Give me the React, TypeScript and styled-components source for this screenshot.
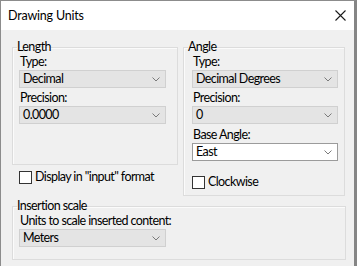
import React from "react";
import styled, { createGlobalStyle } from "styled-components";

const GlobalStyle = createGlobalStyle`
  html, body {
    margin: 0;
    padding: 0;
    background: #f0f0f0;
  }
  body {
    font-family: Lato, "Noto Sans", sans-serif;
    font-size: 12.5px;
    letter-spacing: -0.6px;
    color: #000;
  }
`;

const Window = styled.div`
  width: 357px;
  height: 266px;
  box-sizing: border-box;
  border-left: 1px solid #8c8c8c;
  border-top: 1px solid #8c8c8c;
  border-right: 3px solid #858585;
  background: #f0f0f0;
  display: flex;
  flex-direction: column;
  overflow: hidden;
`;

const TitleBar = styled.div`
  height: 29px;
  flex-shrink: 0;
  background: #fff;
  display: flex;
  align-items: center;
  justify-content: space-between;
  padding: 0 8px 0 7px;
`;

const Title = styled.span`
  font-size: 12.5px;
  letter-spacing: -0.2px;
  line-height: 14px;
`;

const Body = styled.div`
  padding: 10px 8px 0 11px;
  display: flex;
  flex-direction: column;
`;

const Columns = styled.div`
  display: grid;
  grid-template-columns: 166px 162px;
  column-gap: 5px;
  align-items: start;
`;

const Column = styled.div`
  display: flex;
  flex-direction: column;
`;

const Group = styled.fieldset<{ $bottom: number; $indent: number; $top?: number }>`
  margin: ${(p) => p.$top ?? 0}px 0 0 0;
  padding: 0 6px ${(p) => p.$bottom}px ${(p) => p.$indent}px;
  border: 1px solid #dcdcdc;
  box-shadow: inset 1px 1px 0 #fbfbfb;
  min-width: 0;
  display: flex;
  flex-direction: column;
`;

const Legend = styled.legend<{ $shift: number }>`
  padding: 0;
  margin-left: ${(p) => p.$shift}px;
  line-height: 14px;
`;

const Label = styled.div<{ $gap?: number }>`
  line-height: 14px;
  margin-top: ${(p) => p.$gap ?? 1}px;
  padding-left: 1px;
`;

const Select = styled.div<{ $editable?: boolean; $width?: number }>`
  box-sizing: border-box;
  height: 18px;
  width: ${(p) => p.$width ?? 146}px;
  margin-top: 1px;
  display: flex;
  align-items: center;
  justify-content: space-between;
  padding: 0 5px 0 3px;
  background: ${(p) => (p.$editable ? "#ffffff" : "#e4e4e4")};
  border: 1px solid ${(p) => (p.$editable ? "#9b9b9b" : "#d0d0d0")};
  line-height: 14px;
`;

const CheckRow = styled.label<{ $top: number; $left: number }>`
  display: flex;
  align-items: center;
  gap: 3px;
  margin: ${(p) => p.$top}px 0 0 ${(p) => p.$left}px;
  line-height: 14px;
`;

const Box = styled.span`
  box-sizing: border-box;
  width: 13px;
  height: 13px;
  background: #fff;
  border: 1px solid #333;
`;

const Chevron = () => (
  <svg width="8" height="5" viewBox="0 0 8 5">
    <polyline points="0.5,0.5 4,4 7.5,0.5" fill="none" stroke="#7a7a7a" strokeWidth="1" />
  </svg>
);

const CloseIcon = () => (
  <svg width="11" height="11" viewBox="0 0 11 11">
    <path d="M0.5 0.5 L10.5 10.5 M10.5 0.5 L0.5 10.5" stroke="#1a1a1a" strokeWidth="1.1" />
  </svg>
);

const Dropdown = ({ value, editable, width }: { value: string; editable?: boolean; width?: number }) => (
  <Select $editable={editable} $width={width}>
    <span>{value}</span>
    <Chevron />
  </Select>
);

export default function App() {
  return (
    <>
      <GlobalStyle />
      <Window>
        <TitleBar>
          <Title>Drawing Units</Title>
          <CloseIcon />
        </TitleBar>
        <Body>
          <Columns>
            <Column>
              <Group $bottom={40} $indent={6}>
                <Legend $shift={-2}>Length</Legend>
                <Label>Type:</Label>
                <Dropdown value="Decimal" width={147} />
                <Label $gap={3}>Precision:</Label>
                <Dropdown value="0.0000" width={147} />
              </Group>
              <CheckRow $top={5} $left={7}>
                <Box />
                Display in "input" format
              </CheckRow>
            </Column>
            <Column>
              <Group $bottom={6} $indent={8}>
                <Legend $shift={-4}>Angle</Legend>
                <Label>Type:</Label>
                <Dropdown value="Decimal Degrees" />
                <Label $gap={3}>Precision:</Label>
                <Dropdown value="0" />
                <Label $gap={4}>Base Angle:</Label>
                <Dropdown value="East" editable />
                <CheckRow $top={14} $left={0}>
                  <Box />
                  Clockwise
                </CheckRow>
              </Group>
            </Column>
          </Columns>
          <Group $bottom={12} $indent={6} $top={3}>
            <Legend $shift={-2}>Insertion scale</Legend>
            <Label>Units to scale inserted content:</Label>
            <Dropdown value="Meters" width={147} />
          </Group>
        </Body>
      </Window>
    </>
  );
}
